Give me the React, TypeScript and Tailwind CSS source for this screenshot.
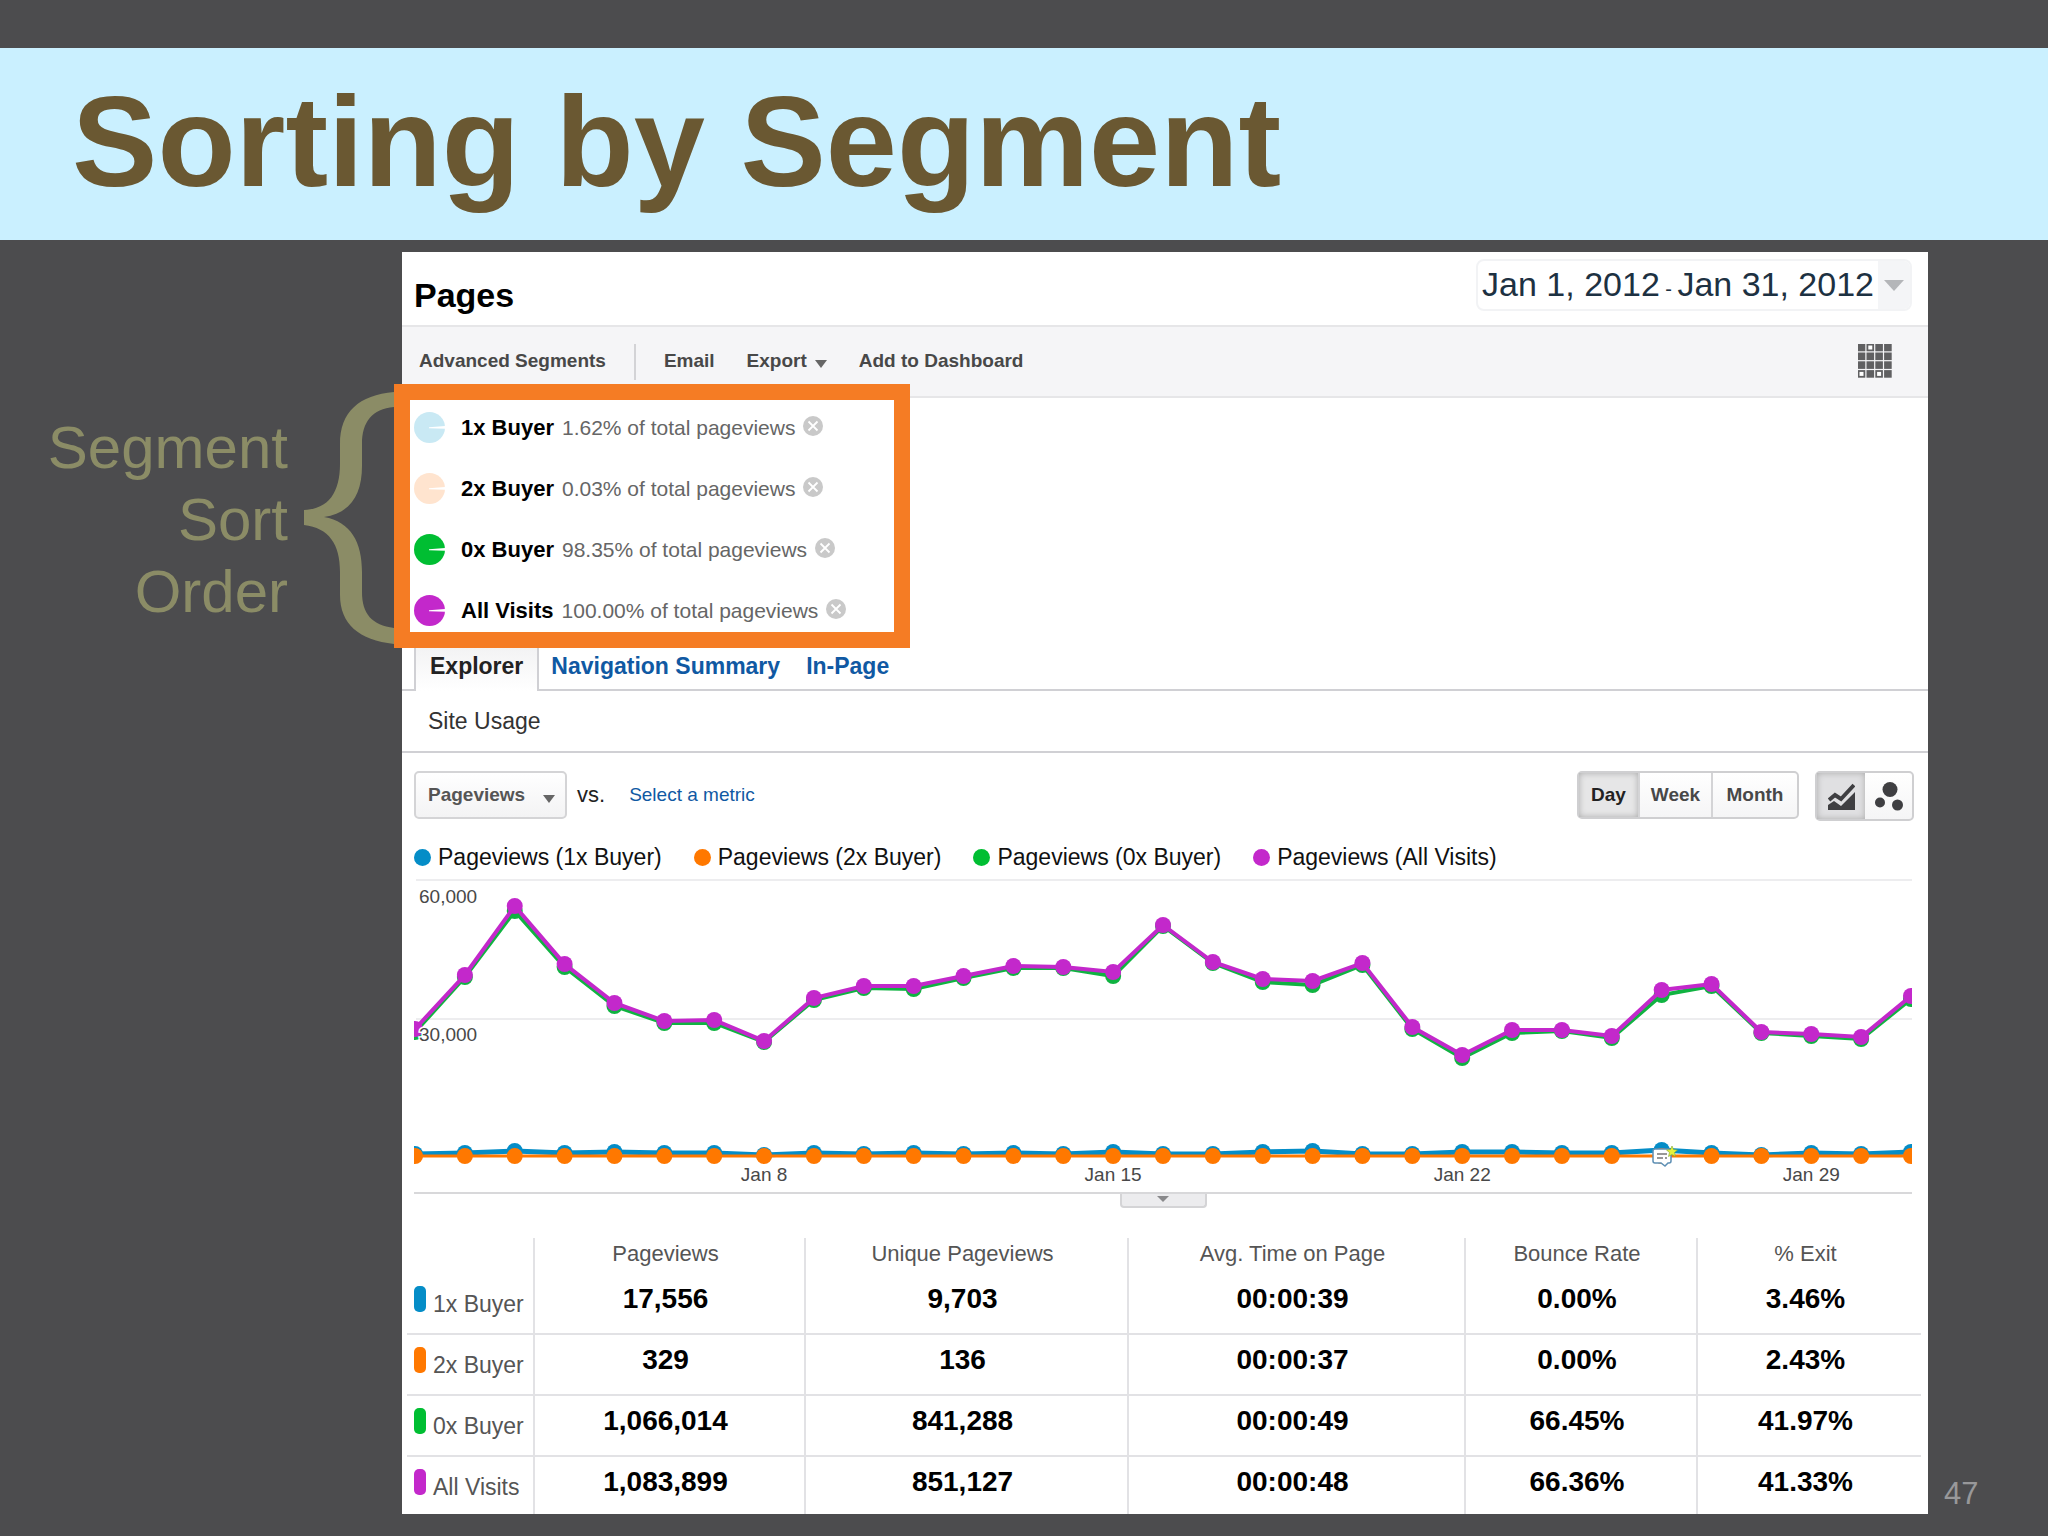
import type { ReactNode } from "react";

interface Segment {
    name: string;
    share: string;
    pieClass: string;
    dotClass: string;
    metrics: string[];
}

interface CaretProps {
    className?: string;
}

interface SeriesProps {
    values: number[];
    color: string;
    width?: number;
}

const SEGMENTS: Segment[] = [
    {
        name: "1x Buyer",
        share: "1.62%",
        pieClass: "text-[#c9e9f4]",
        dotClass: "bg-[#058dc7]",
        metrics: ["17,556", "9,703", "00:00:39", "0.00%", "3.46%"],
    },
    {
        name: "2x Buyer",
        share: "0.03%",
        pieClass: "text-[#ffe4cf]",
        dotClass: "bg-[#ff7800]",
        metrics: ["329", "136", "00:00:37", "0.00%", "2.43%"],
    },
    {
        name: "0x Buyer",
        share: "98.35%",
        pieClass: "text-[#00be32]",
        dotClass: "bg-[#00be32]",
        metrics: ["1,066,014", "841,288", "00:00:49", "66.45%", "41.97%"],
    },
    {
        name: "All Visits",
        share: "100.00%",
        pieClass: "text-[#c328cb]",
        dotClass: "bg-[#c328cb]",
        metrics: ["1,083,899", "851,127", "00:00:48", "66.36%", "41.33%"],
    },
];

const METRICS = ["Pageviews", "Unique Pageviews", "Avg. Time on Page", "Bounce Rate", "% Exit"];

// One height per day of January, measured down from the top of the chart
const ALL_VISITS = [
    160, 106, 37, 95, 134, 152, 151, 172, 129, 117, 117, 107, 97, 98, 103, 56, 93, 110, 112, 94, 158, 186, 161, 161,
    167, 121, 115, 163, 165, 168, 127,
];
const ZERO_BUYER = [
    163, 108, 42, 98, 137, 154, 154, 173, 131, 119, 120, 109, 99, 99, 107, 57, 94, 113, 116, 96, 160, 189, 164, 162,
    169, 126, 117, 164, 167, 170, 130,
];
const ONE_BUYER = [
    285, 284, 282, 284, 283, 284, 284, 286, 284, 285, 284, 285, 284, 285, 283, 285, 285, 283, 282, 285, 285, 283, 283,
    284, 284, 281, 284, 286, 284, 285, 283,
];
const TWO_BUYER = ONE_BUYER.map(() => 287);

const DAY_LABELS = [
    { day: 8, label: "Jan 8" },
    { day: 15, label: "Jan 15" },
    { day: 22, label: "Jan 22" },
    { day: 29, label: "Jan 29" },
];

const dayX = (index: number) => 1 + (index * 1496) / 30;

function Caret({ className = "h-2 w-3.5" }: CaretProps) {
    return (
        <svg viewBox="0 0 14 8" className={className} preserveAspectRatio="none" aria-hidden="true">
            <path d="M0 0h14L7 8z" fill="currentColor" />
        </svg>
    );
}

function CalloutBracket() {
    return (
        <svg viewBox="0 0 90 252" className="mt-2 ml-4 h-[252px] w-[90px]" aria-hidden="true">
            <path
                d="M90 0C55 3 36 20 36 52V72C36 100 25 117 0 118V133C25 136 36 152 36 180V203C36 232 55 248 90 252V236C68 233 58 222 58 200V180C58 150 47 130 20 125C47 121 58 102 58 74V52C58 30 68 17 90 15Z"
                fill="currentColor"
            />
        </svg>
    );
}

function SegmentRow({ segment }: { segment: Segment }) {
    return (
        <li className="flex h-[31px] items-center">
            <svg viewBox="0 0 31 31" className={`size-[31px] ${segment.pieClass}`} aria-hidden="true">
                <circle cx="15.5" cy="15.5" r="15.5" fill="currentColor" />
                <path d="M15 15.2L31 14v2.800L15 16.200z" fill="#fff" />
            </svg>
            <span className="ml-4 text-[22px] font-bold text-black">{segment.name}</span>
            <span className="ml-2 text-[21px] text-[#666]">{segment.share} of total pageviews</span>
            <button type="button" aria-label={`Remove ${segment.name}`} className="mb-1 ml-2">
                <svg viewBox="0 0 20 20" className="size-5">
                    <circle cx="10" cy="10" r="10" fill="#c9c9c9" />
                    <path d="M5.500 5.500l9 9M14.500 5.500l-9 9" stroke="#fff" strokeWidth="1.800" />
                </svg>
            </button>
        </li>
    );
}

function ToolbarButton({ children, className = "" }: { children: ReactNode; className?: string }) {
    return (
        <button type="button" className={`flex items-center text-[19px] font-bold text-[#484848] ${className}`}>
            {children}
        </button>
    );
}

function Series({ values, color, width = 4 }: SeriesProps) {
    return (
        <g fill={color}>
            <polyline
                points={values.map((y, i) => `${dayX(i)},${y}`).join(" ")}
                fill="none"
                stroke={color}
                strokeWidth={width}
            />
            {values.map((y, i) => (
                <circle key={i} cx={dayX(i)} cy={y} r="8" />
            ))}
        </g>
    );
}

function Chart() {
    return (
        <svg viewBox="0 0 1498 323" className="block w-full" role="img" aria-label="Pageviews per day by segment">
            <path d="M2 11h1496M2 150h1496" stroke="#ededef" strokeWidth="2" />
            <Series values={ZERO_BUYER} color="#10b341" />
            <Series values={ALL_VISITS} color="#c328cb" />
            <Series values={ONE_BUYER} color="#058dc7" width={5} />
            <Series values={TWO_BUYER} color="#ff7800" width={3} />
            <g fontSize="19" fill="#484848" stroke="#fff" strokeWidth="3" paintOrder="stroke">
                <text x="5" y="34">
                    60,000
                </text>
                <text x="5" y="172">
                    30,000
                </text>
                {DAY_LABELS.map(({ day, label }) => (
                    <text key={day} x={dayX(day - 1)} y="312" textAnchor="middle">
                        {label}
                    </text>
                ))}
            </g>
            <g transform="translate(1238 279)">
                <path
                    d="M3 1h14q2 0 2 2v10q0 2-2 2h-1l-3 3-4-3H3q-2 0-2-2V3q0-2 2-2z"
                    fill="#fff"
                    stroke="#5d8fb4"
                    strokeWidth="1.5"
                />
                <path d="M5 6h10M5 10h6M13 10h2" stroke="#777" strokeWidth="1.3" />
                <path d="M20-2l1.500 3.500 4 .5-3 2.500 1 4-3.500-2-3.500 2 1-4-3-2.500 4-.5z" fill="#e6f23c" stroke="#7fa82e" strokeWidth=".6" />
            </g>
        </svg>
    );
}

function MetricsTable() {
    return (
        <table className="w-full table-fixed border-separate border-spacing-0">
            <colgroup>
                <col className="w-[126px]" />
                <col className="w-[271px]" />
                <col className="w-[323px]" />
                <col className="w-[337px]" />
                <col className="w-[232px]" />
                <col />
            </colgroup>
            <thead>
                <tr className="h-9">
                    <td />
                    {METRICS.map((metric) => (
                        <th
                            key={metric}
                            scope="col"
                            className="border-l-2 border-[#e2e2e5] p-0 pr-2 align-top text-[22px] leading-8 font-normal text-[#555]"
                        >
                            {metric}
                        </th>
                    ))}
                </tr>
            </thead>
            <tbody>
                {SEGMENTS.map((segment) => (
                    <tr key={segment.name} className="group h-[61px] last:h-[57px]">
                        <th
                            scope="row"
                            className="border-b-2 border-[#e2e2e5] p-0 align-top font-normal group-last:border-b-0"
                        >
                            <div className="flex pt-3 pl-[7px]">
                                <span className={`h-[26px] w-3 rounded-[5px] ${segment.dotClass}`} />
                                <span className="mt-1 ml-[7px] text-[23px] leading-7 whitespace-nowrap text-[#555]">
                                    {segment.name}
                                </span>
                            </div>
                        </th>
                        {segment.metrics.map((value, i) => (
                            <td
                                key={METRICS[i]}
                                className="border-b-2 border-l-2 border-[#e2e2e5] p-0 pt-[7px] pr-2 text-center align-top text-[28px] leading-9 font-bold text-black group-last:border-b-0"
                            >
                                {value}
                            </td>
                        ))}
                    </tr>
                ))}
            </tbody>
        </table>
    );
}

function Report() {
    return (
        <section className="min-w-0 flex-1 bg-white">
            <div className="flex h-[75px] items-start justify-between border-b-2 border-[#e6e6e8] pr-4 pl-3">
                <h2 className="pt-[23px] text-[34px] leading-10 font-bold text-black">Pages</h2>
                <button
                    type="button"
                    className="mt-[7px] flex h-[52px] overflow-hidden rounded-lg border-2 border-[#f2f3f5] text-[34px] leading-[46px] text-[#1d3142]"
                >
                    <span className="px-1">
                        Jan 1, 2012 <span className="-mx-1 text-[20px]">-</span> Jan 31, 2012
                    </span>
                    <span className="flex w-8 items-center justify-center self-stretch bg-[#f4f5f7] text-[#b4b6b9]">
                        <Caret className="h-[11px] w-5" />
                    </span>
                </button>
            </div>

            <div className="flex h-[71px] items-center border-b-2 border-[#e6e6e8] bg-[#f5f5f7] pr-9 pl-[17px]">
                <ToolbarButton>Advanced Segments</ToolbarButton>
                <span className="mx-7 h-9 w-0.5 bg-[#d3d3d6]" />
                <ToolbarButton>Email</ToolbarButton>
                <ToolbarButton className="ml-8">
                    Export <Caret className="mt-1 ml-2 h-2 w-3 text-[#666]" />
                </ToolbarButton>
                <ToolbarButton className="ml-8">Add to Dashboard</ToolbarButton>
                <button type="button" aria-label="Customize report" className="mb-0.5 ml-auto">
                    <svg viewBox="0 0 34 34" className="size-[34px]">
                        {Array.from({ length: 16 }, (_, i) => {
                            const isHollow = i === 1 || i === 12 || i === 14;
                            return (
                                <rect
                                    key={i}
                                    x={(i % 4) * 8.8 + 0.6}
                                    y={Math.floor(i / 4) * 8.8 + 0.6}
                                    width="5.8"
                                    height="5.8"
                                    fill={isHollow ? "#fff" : "#606062"}
                                    stroke="#606062"
                                    strokeWidth="1.8"
                                />
                            );
                        })}
                    </svg>
                </button>
            </div>

            <ul className="relative -mt-3.5 -ml-2 flex w-[516px] flex-col gap-[30px] border-16 border-[#f57c24] bg-white pt-3 pb-1.5 pl-1">
                {SEGMENTS.map((segment) => (
                    <SegmentRow key={segment.name} segment={segment} />
                ))}
            </ul>

            <nav className="flex h-[43px] text-[23px] leading-9 font-bold text-[#1059a3]">
                <span className="w-3 border-b-2 border-[#d0d0d4]" />
                <a
                    href="#explorer"
                    className="border-x-2 border-[#d0d0d4] bg-linear-to-b from-[#f3f3f4] to-white px-3.5 text-[#222]"
                >
                    Explorer
                </a>
                <div className="flex flex-1 gap-[26px] border-b-2 border-[#d0d0d4] pl-3">
                    <a href="#navigation">Navigation Summary</a>
                    <a href="#in-page">In-Page</a>
                </div>
            </nav>

            <div className="flex h-[62px] items-center border-b-2 border-[#d0d0d4] pl-[26px]">
                <a href="#site-usage" className="text-[23px] text-[#333]">
                    Site Usage
                </a>
            </div>

            <div className="flex items-start pt-[18px] pr-3.5 pl-3">
                <div className="relative">
                    <select
                        aria-label="Metric"
                        className="h-12 w-[153px] appearance-none rounded-[5px] border-2 border-[#d4d4d6] bg-linear-to-b from-white to-[#f3f3f4] pl-3 text-[19px] font-bold text-[#555]"
                    >
                        <option>Pageviews</option>
                    </select>
                    <Caret className="pointer-events-none absolute top-6 right-3 h-2 w-3 text-[#666]" />
                </div>
                <span className="ml-2.5 text-[22px] leading-12 text-[#222]">vs.</span>
                <a href="#metric" className="ml-6 text-[19px] leading-12 text-[#1059a3]">
                    Select a metric
                </a>

                <div className="ml-auto flex h-12 rounded-[5px] border-2 border-[#cfcfd1] bg-linear-to-b from-white to-[#f5f5f6] text-[19px] font-bold text-[#484848]">
                    <button type="button" className="w-[59px] bg-[#e6e6e7] text-[#222] shadow-[inset_0_0_6px_#aaa]">
                        Day
                    </button>
                    <button type="button" className="w-[75px] border-x-2 border-[#d4d4d6]">
                        Week
                    </button>
                    <button type="button" className="w-[84px]">
                        Month
                    </button>
                </div>
                <div className="ml-4 flex h-[50px] rounded-[5px] border-2 border-[#cfcfd1] bg-linear-to-b from-white to-[#f5f5f6] text-[#3f3f42]">
                    <button
                        type="button"
                        aria-label="Line chart"
                        className="flex w-12 items-center justify-center bg-[#e0e0e2] shadow-[inset_0_0_6px_#aaa]"
                    >
                        <svg viewBox="0 0 27 28" className="h-7 w-[27px]">
                            <path d="M0 28v-5l6-4 7 5 14-14v18z" fill="currentColor" />
                            <path d="M1 18l6-5 6 4L26 3" fill="none" stroke="currentColor" strokeWidth="4" />
                        </svg>
                    </button>
                    <button
                        type="button"
                        aria-label="Motion chart"
                        className="flex w-[47px] items-center justify-center"
                    >
                        <svg viewBox="0 0 28 29" className="h-[29px] w-7" fill="currentColor">
                            <circle cx="15" cy="7.5" r="7.5" />
                            <circle cx="5" cy="20.5" r="5" />
                            <circle cx="22.5" cy="23" r="5.5" />
                        </svg>
                    </button>
                </div>
            </div>

            <ul className="mt-6 flex gap-8 pl-3 text-[23px] leading-6 whitespace-nowrap text-[#111]">
                {SEGMENTS.map((segment) => (
                    <li key={segment.name} className="flex items-center">
                        <span className={`mr-[7px] size-[17px] rounded-full ${segment.dotClass}`} />
                        Pageviews ({segment.name})
                    </li>
                ))}
            </ul>

            <div className="pr-4 pl-3">
                <Chart />
                <div className="flex justify-center border-t-2 border-[#d8d8da]">
                    <button
                        type="button"
                        aria-label="Show annotations"
                        className="flex h-3.5 w-[87px] justify-center rounded-b-sm border-2 border-t-0 border-[#d4d4d6] bg-[#ececee] pt-0.5 text-[#8a8a8c]"
                    >
                        <Caret className="h-1.5 w-3" />
                    </button>
                </div>
            </div>

            <div className="mt-[30px] pr-[7px] pl-[5px]">
                <MetricsTable />
            </div>
        </section>
    );
}

export default function App() {
    return (
        <main className="flex min-h-screen flex-col bg-[#4c4c4e] pt-12 font-['Liberation_Sans',Arial,sans-serif]">
            <header className="flex h-48 items-center bg-[#caf0ff] pb-1 pl-[72px]">
                <h1 className="text-[128px] leading-none font-bold text-[#6a5832]">Sorting by Segment</h1>
            </header>

            <div className="flex pt-3 pb-[22px]">
                <aside className="flex w-[402px] shrink-0 items-start pt-[132px] text-[#8b8c66]">
                    <p className="w-[288px] pt-7 text-right text-[60px] leading-[72px]">
                        Segment
                        <br />
                        Sort
                        <br />
                        Order
                    </p>
                    <CalloutBracket />
                </aside>
                <Report />
                <footer className="flex w-[120px] shrink-0 items-end pl-4 text-[31px] leading-10 text-[#98989a]">
                    47
                </footer>
            </div>
        </main>
    );
}
